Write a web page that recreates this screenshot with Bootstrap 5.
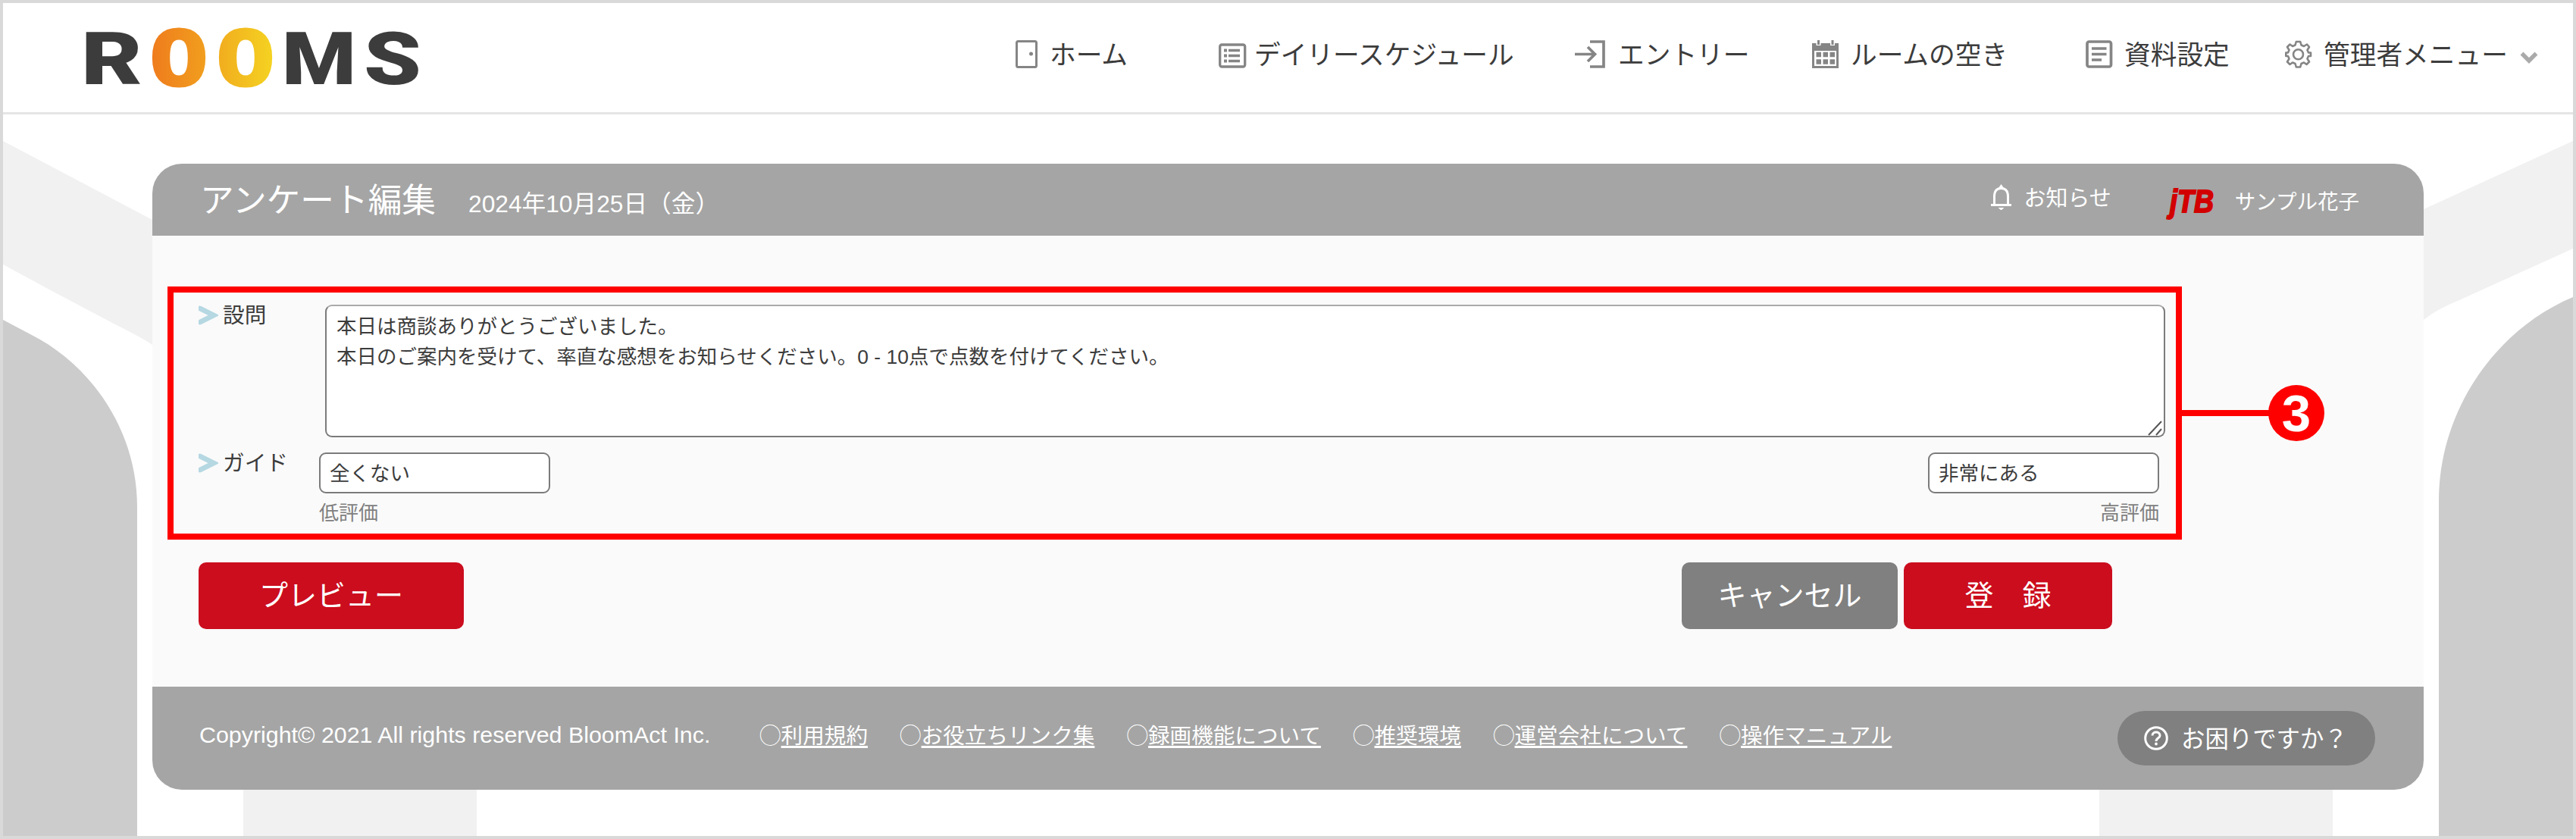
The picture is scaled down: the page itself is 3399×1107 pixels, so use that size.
<!DOCTYPE html>
<html lang="ja">
<head>
<meta charset="utf-8">
<title>ROOMS アンケート編集</title>
<link rel="stylesheet" href="https://cdn.jsdelivr.net/npm/bootstrap@5.3.0/dist/css/bootstrap.min.css">
<style>
body{font-family:"Noto Sans CJK JP",sans-serif;color:#3c3c3c;background:#fff;line-height:1}
.stage{width:3399px;height:1107px;border:4px solid #d9d9d9;overflow:hidden}
.backdrop{left:-4px;top:-4px;z-index:0}
.topbar{height:147px;border-bottom:3px solid #e5e5e5;padding:0 0 9px 92px;z-index:1;background:#fff}
.brand-mark{width:480px;height:138px;overflow:visible}
.menu-grid{grid-template-columns:268px 470px 313px 361px 263px auto;margin-left:764px;font-size:34.7px}
.menu-grid svg{flex:none}
.menu-grid span{position:relative;top:-1px;white-space:nowrap}
.panel{width:2997px;margin:65px 0 0 197px;border-radius:39px;overflow:hidden;background:#fafafa;z-index:1}
.panel-head{height:95px;background:#a5a5a5;color:#fff;padding-left:63px}
.page-title{font-size:44.7px;font-weight:400;line-height:1;margin:-4px 0 0}
.page-date{font-family:"Liberation Sans","Noto Sans CJK JP",sans-serif;font-size:31.7px;margin:13px 0 0 43px}
.notice{font-size:29px;margin-left:auto}
.notice svg{margin-top:-7px}
.notice span{margin-top:-9px}
.corp{font-family:"Liberation Sans",sans-serif;margin:6px 0 0 75px;overflow:visible}
.user{font-size:27.5px;margin:2px 85px 0 26px}
.panel-body{height:595px;padding:67px 0 0 20px}
.frame{width:2658px;height:334px;border:8px solid #f00;padding:16px 14px 0 33px}
.callout-line{left:2650px;top:155px;width:120px;height:8px;background:#f00}
.callout-no{left:2764px;top:122px;width:74px;height:74px;background:#f00;color:#fff;font:bold 69px/75px "Liberation Sans",sans-serif;text-align:center}
.item-label{font-size:28.7px;height:28px}
.item-label svg{margin-right:6px}
.item-label span{margin-top:-3px}
.lab-a{width:167px}.lab-b{width:159px}
.guide-row{margin-top:20px}
.field{border:2px solid #7b7b7b;border-radius:9px;color:#3c3c3c;background:#fff;font-family:"Liberation Sans","Noto Sans CJK JP",sans-serif;font-size:26.5px}
textarea.field{width:2428px;height:175px;line-height:39.7px;padding:8px 13px;resize:none;display:block;overflow:hidden;border-top-color:#aaa}
input.field{width:305px;height:54px;padding:0 12px 3px}
.grip{right:3px;bottom:2px}
.hint{font-size:26px;color:#808080;margin-top:11px}
.side-high{margin-right:8px}
.acts{margin:30px 411px 0 41px}
.acts .btn{height:88px;font-size:38px;line-height:1;border:0;border-radius:10px;color:#fff;padding:0 0 6px}
.w-preview{width:350px}.w-cancel{width:285px}.w-save{width:275px}
.b-red{background:#cb0d1e}.b-gray{background:#808080}
.panel-foot{height:136px;background:#a5a5a5;color:#fff;padding:0 64px 10px 62px}
.copy{font-family:"Liberation Sans",sans-serif;font-size:30.4px;width:739px;white-space:nowrap}
.links{font-size:28.6px;gap:42px;white-space:nowrap}
.links a{color:#fff;text-decoration:underline;text-decoration-thickness:3px;text-underline-offset:3px;text-decoration-skip-ink:none}
.help{width:340px;height:72px;border-radius:36px;background:#808080;font-size:31.4px;margin:10px 0 0 auto;padding-left:35px}
.help span{margin-top:-3px;white-space:nowrap}
</style>
<script src="https://cdn.jsdelivr.net/npm/bootstrap@5.3.0/dist/js/bootstrap.bundle.min.js"></script>
</head>
<body>
<div class="stage position-relative">
<svg class="backdrop position-absolute" width="3399" height="1107" viewBox="0 0 3399 1107">
<g fill="#f1f1f1"><path d="M4 186L201 290V455Q190 447 150 427L65 382L4 349z"/><path d="M3395 186L3198 276V422Q3215 408 3245 396L3395 328z"/><path d="M321 1000h308v107H321zM2770 1000h308v107h-308z"/></g>
<g fill="#ccc"><path d="M4 422L40 441C122 482 181 570 181 668V1107H4z"/><path d="M3395 392C3290 436 3218 545 3218 660V1107H3395z"/></g>
</svg>
<header class="topbar d-flex align-items-center position-relative">
<svg class="brand-mark" viewBox="96 4 480 138" font-family="Roboto,sans-serif" font-weight="900">
<defs><linearGradient id="g1"><stop offset="0" stop-color="#ef7a1d"/><stop offset="1" stop-color="#f1a01e"/></linearGradient><linearGradient id="g2"><stop offset="0" stop-color="#f1ab1e"/><stop offset="1" stop-color="#f5d422"/></linearGradient></defs>
<text x="107" y="112" font-size="97" fill="#3c3c3c" textLength="81" lengthAdjust="spacingAndGlyphs">R</text>
<g font-family="DejaVu Sans Mono,monospace" font-weight="bold" stroke-width="3" stroke-linejoin="round">
<text x="197" y="114" font-size="99" fill="url(#g1)" stroke="url(#g1)" textLength="78" lengthAdjust="spacingAndGlyphs">O</text>
<text x="285" y="114" font-size="99" fill="url(#g2)" stroke="url(#g2)" textLength="78" lengthAdjust="spacingAndGlyphs">O</text></g>
<text x="372" y="112" font-size="97" fill="#3c3c3c" textLength="98" lengthAdjust="spacingAndGlyphs">M</text>
<text x="480" y="112" font-size="97" fill="#3c3c3c" textLength="76" lengthAdjust="spacingAndGlyphs">S</text>
</svg>
<nav class="menu-grid d-grid align-items-center">
<div class="d-flex align-items-center"><svg class="me-3" width="29" height="37" fill="none" stroke="#858585" stroke-width="3"><rect x="1.5" y="1.5" width="26" height="34" rx="2"/><circle cx="20.500" cy="18" r="2.500" fill="#858585" stroke="none"/></svg><span>ホーム</span></div>
<div class="d-flex align-items-center"><svg width="47" height="37" fill="none" stroke="#858585" stroke-width="3.300"><rect x="1.700" y="6" width="33" height="29" rx="2.500"/><path d="M13 13.500H28M13 20.500H28M13 27.500H28"/><path d="M7 13.500h4M7 20.500h4M7 27.500h4" stroke-width="4"/></svg><span>デイリースケジュール</span></div>
<div class="d-flex align-items-center"><svg width="57" height="37" fill="none" stroke="#858585" stroke-width="3.700"><path d="M20 2H38V35H20M0 18.500H26M17 9l9.500 9.500L17 28"/></svg><span>エントリー</span></div>
<div class="d-flex align-items-center"><svg width="51" height="37"><path d="M0 4H35V37H0z" fill="#858585"/><path d="M3 14H32V34H3z" fill="#fff"/><path d="M8.500 0v7M27 0v7" stroke="#fff" stroke-width="6"/><path d="M8.500 0v6M27 0v6" stroke="#858585" stroke-width="3"/><path d="M5.500 19h6.500M14.500 19h6.500M23.500 19h6.500M5.500 28.500h6.500M14.500 28.500h6.500M23.500 28.500h6.500" stroke="#858585" stroke-width="6.500"/></svg><span>ルームの空き</span></div>
<div class="d-flex align-items-center"><svg width="51" height="37" fill="none" stroke="#858585" stroke-width="3.700"><rect x="2" y="2" width="31.500" height="33" rx="2.500"/><path d="M8 11H27.500M8 18.500H27.500M8 26H21"/></svg><span>資料設定</span></div>
<div class="d-flex align-items-center"><svg width="51" height="37" viewBox="0 0 51 37" fill="none" stroke="#858585" stroke-width="2.600" stroke-linejoin="round"><path d="M14.800 2H20.200L21.500 6.500L25 8L29 5.500L32 9L29.500 13L31 16.500H34V21H31L29.500 24.500L32 28.500L28.500 32L25 29.500L21.500 31L20.200 35.500H14.800L13.500 31L10 29.500L6.500 32L3 28.500L5.500 24.500L4 21H1.300V16.500H4L5.500 13L3 9L6.500 5.500L10 8L13.500 6.500z"/><circle cx="17.500" cy="18.700" r="6.500"/></svg><span>管理者メニュー</span><svg class="ms-3 mt-2" width="24" height="16" fill="none" stroke="#aaa" stroke-width="5.500"><path d="M2.500 2.500L12 12L21.500 2.500"/></svg></div>
</nav>
</header>
<main class="panel position-relative">
<div class="panel-head d-flex align-items-center">
<h1 class="page-title">アンケート編集</h1><div class="page-date">2024年10月25日（金）</div>
<div class="notice d-flex align-items-center"><svg class="me-3" width="27" height="34" fill="none" stroke="#fff" stroke-width="3"><path d="M4.500 27.500V16C4.500 9 8 5.500 13.500 5.500S22.500 9 22.500 16V27.500M0 27.500H27"/><path d="M13.500 0l3.500 5h-7zM9.500 31h8l-4 3.500z" fill="#fff" stroke="none"/></svg><span>お知らせ</span></div>
<svg class="corp" width="62" height="42" viewBox="0 0 62 42"><text x="2" y="34" font-size="42" font-weight="bold" font-style="italic" fill="#d20000" stroke="#d20000" stroke-width="2" textLength="58" lengthAdjust="spacingAndGlyphs">jTB</text></svg>
<div class="user">サンプル花子</div>
</div>
<div class="panel-body">
<section class="frame position-relative">
<div class="d-flex align-items-start">
<div class="item-label lab-a d-flex align-items-center"><svg width="26" height="26" fill="none" stroke="#b5d8e2" stroke-width="6.500"><path d="M2 4L20 13L2 22" stroke-linecap="round"/></svg><span>設問</span></div>
<div class="position-relative"><textarea class="field">本日は商談ありがとうございました。
本日のご案内を受けて、率直な感想をお知らせください。0 - 10点で点数を付けてください。</textarea><svg class="grip position-absolute" width="20" height="20" stroke="#555" stroke-width="2"><path d="M1 19L18 1M11 19L18 11"/></svg></div>
</div>
<div class="guide-row d-flex align-items-start">
<div class="item-label lab-b d-flex align-items-center"><svg width="26" height="26" fill="none" stroke="#b5d8e2" stroke-width="6.500"><path d="M2 4L20 13L2 22" stroke-linecap="round"/></svg><span>ガイド</span></div>
<div><input class="field d-block" value="全くない"><div class="hint">低評価</div></div>
<div class="side-high ms-auto text-end"><input class="field d-block" value="非常にある"><div class="hint">高評価</div></div>
</div>
<div class="callout-line position-absolute"></div><div class="callout-no position-absolute rounded-circle">3</div>
</section>
<div class="acts d-flex">
<button class="btn b-red w-preview">プレビュー</button>
<button class="btn b-gray w-cancel ms-auto me-2">キャンセル</button>
<button class="btn b-red w-save">登　録</button>
</div>
</div>
<footer class="panel-foot d-flex align-items-center">
<div class="copy">Copyright© 2021 All rights reserved BloomAct Inc.</div>
<div class="links d-flex"><div>◯<a href="#">利用規約</a></div><div>◯<a href="#">お役立ちリンク集</a></div><div>◯<a href="#">録画機能について</a></div><div>◯<a href="#">推奨環境</a></div><div>◯<a href="#">運営会社について</a></div><div>◯<a href="#">操作マニュアル</a></div></div>
<div class="help d-flex align-items-center"><svg width="49" height="32" viewBox="0 0 49 32" fill="none" stroke="#fff" stroke-width="3"><circle cx="16" cy="16" r="14.300"/><path d="M11 12.500C11 6.500 21 6.500 21 12.500C21 16 16 15.500 16 20"/><circle cx="16" cy="23.500" r="1" stroke-width="1.800"/></svg><span>お困りですか？</span></div>
</footer>
</main>
</div>
</body>
</html>
